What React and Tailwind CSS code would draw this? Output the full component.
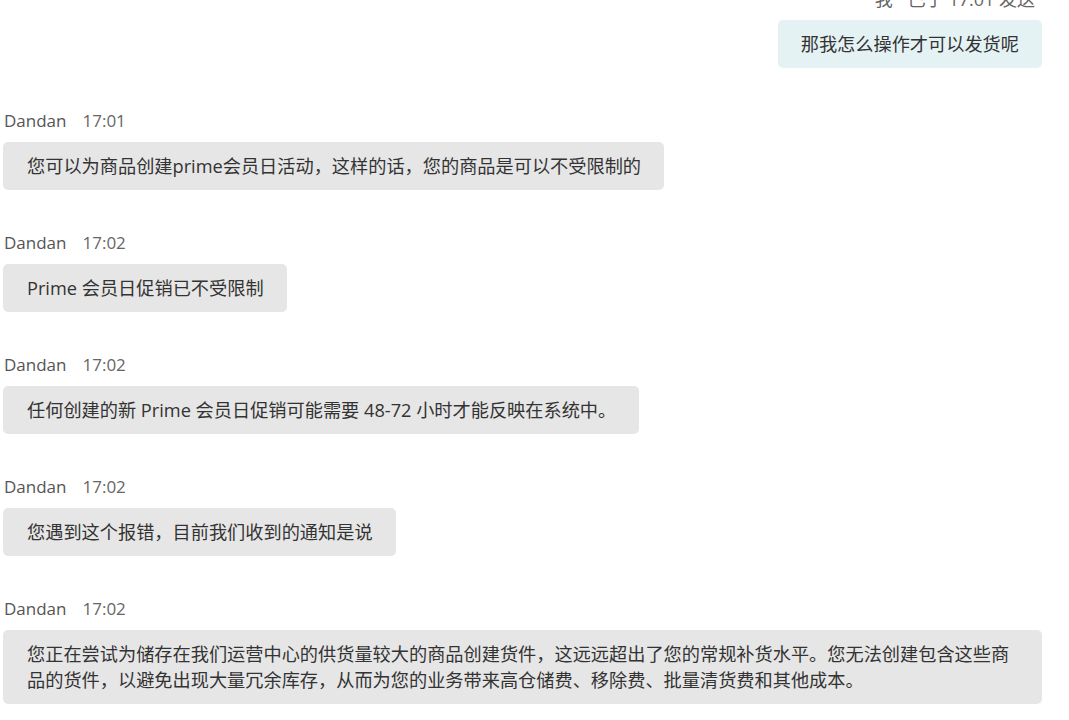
import React from 'react';

const messages = [
    { time: '17:01', text: '您可以为商品创建prime会员日活动，这样的话，您的商品是可以不受限制的' },
    { time: '17:02', text: 'Prime 会员日促销已不受限制' },
    { time: '17:02', text: '任何创建的新 Prime 会员日促销可能需要 48-72 小时才能反映在系统中。' },
    { time: '17:02', text: '您遇到这个报错，目前我们收到的通知是说' },
    {
        time: '17:02',
        text: '您正在尝试为储存在我们运营中心的供货量较大的商品创建货件，这远远超出了您的常规补货水平。您无法创建包含这些商品的货件，以避免出现大量冗余库存，从而为您的业务带来高仓储费、移除费、批量清货费和其他成本。',
    },
];

export default function App() {
    return (
        <div
            className="min-h-screen bg-white pl-[3px] pr-[27px] overflow-hidden"
            style={{ fontFamily: '"Open Sans", "Noto Sans CJK SC", sans-serif' }}
        >
            <div className="flex flex-col items-end">
                <div className="-mt-[12px] mr-[7px] flex text-[18px] leading-[23px] text-[#666]">
                    <span className="mr-[15px]">我</span>
                    <span>已于 17:01 发送</span>
                </div>
                <div className="mt-[9px] bg-[#e4f2f4] rounded-[5px] px-[23px] py-[11px] text-[18.2px] leading-[26px] text-[#333]">
                    那我怎么操作才可以发货呢
                </div>
            </div>

            {messages.map((m, i) => (
                <div key={i} className="mt-[41px] flex flex-col items-start">
                    <div className="ml-[1px] flex gap-[16px] text-[17px] leading-[23px]">
                        <span className="text-[#555]">Dandan</span>
                        <span className="text-[#666]">{m.time}</span>
                    </div>
                    <div className="mt-[10px] bg-[#e6e6e6] rounded-[5px] pl-[24px] pr-[23px] py-[11px] text-[18.2px] leading-[26px] text-[#333]">
                        {m.text}
                    </div>
                </div>
            ))}
        </div>
    );
}
